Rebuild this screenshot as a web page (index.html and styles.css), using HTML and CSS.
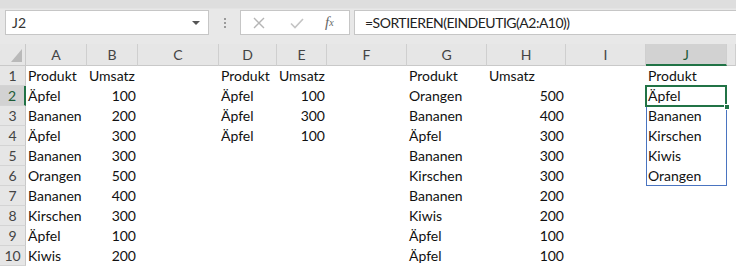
FILE: index.html
```html
<!DOCTYPE html>
<html lang="de">
<head>
<meta charset="utf-8">
<title>Excel – SORTIEREN</title>
<link rel="stylesheet" href="styles.css">
</head>
<body>
<div class="app">
  <div class="formulabar">
    <div class="namebox">
      <span class="name">J2</span>
      <span class="dd"></span>
    </div>
    <div class="grip"><i></i><i></i><i></i></div>
    <div class="fbtns">
      <span class="fb cancel">
        <svg width="14" height="14" viewBox="0 0 14 14"><path d="M2 2L12 12M12 2L2 12" stroke="#b5b5b5" stroke-width="1.4" fill="none"/></svg>
      </span>
      <span class="fb enter">
        <svg width="16" height="14" viewBox="0 0 16 14"><path d="M2 7.5L6 11.5L14 3" stroke="#c4c4c4" stroke-width="1.6" fill="none"/></svg>
      </span>
      <span class="fb fx"><i>f</i><sub>x</sub></span>
    </div>
    <div class="formula">=SORTIEREN(EINDEUTIG(A2:A10))</div>
  </div>

  <div class="sheet">
    <div class="corner"><span class="tri"></span></div>
    <div class="ch">A</div><div class="ch">B</div><div class="ch">C</div><div class="ch">D</div><div class="ch">E</div><div class="ch">F</div><div class="ch">G</div><div class="ch">H</div><div class="ch">I</div><div class="ch active">J</div><div class="ch"></div>

    <div class="rh">1</div><div class="c">Produkt</div><div class="c">Umsatz</div><div class="c"></div><div class="c">Produkt</div><div class="c">Umsatz</div><div class="c"></div><div class="c">Produkt</div><div class="c">Umsatz</div><div class="c"></div><div class="c">Produkt</div><div class="c"></div>
    <div class="rh active">2</div><div class="c">Äpfel</div><div class="c n">100</div><div class="c"></div><div class="c">Äpfel</div><div class="c n">100</div><div class="c"></div><div class="c">Orangen</div><div class="c n">500</div><div class="c"></div><div class="c sp sp-top cur"><span class="t">Äpfel</span><span class="handle"></span></div><div class="c"></div>
    <div class="rh">3</div><div class="c">Bananen</div><div class="c n">200</div><div class="c"></div><div class="c">Äpfel</div><div class="c n">300</div><div class="c"></div><div class="c">Bananen</div><div class="c n">400</div><div class="c"></div><div class="c sp">Bananen</div><div class="c"></div>
    <div class="rh">4</div><div class="c">Äpfel</div><div class="c n">300</div><div class="c"></div><div class="c">Äpfel</div><div class="c n">100</div><div class="c"></div><div class="c">Äpfel</div><div class="c n">300</div><div class="c"></div><div class="c sp">Kirschen</div><div class="c"></div>
    <div class="rh">5</div><div class="c">Bananen</div><div class="c n">300</div><div class="c"></div><div class="c"></div><div class="c"></div><div class="c"></div><div class="c">Bananen</div><div class="c n">300</div><div class="c"></div><div class="c sp">Kiwis</div><div class="c"></div>
    <div class="rh">6</div><div class="c">Orangen</div><div class="c n">500</div><div class="c"></div><div class="c"></div><div class="c"></div><div class="c"></div><div class="c">Kirschen</div><div class="c n">300</div><div class="c"></div><div class="c sp sp-bot">Orangen</div><div class="c"></div>
    <div class="rh">7</div><div class="c">Bananen</div><div class="c n">400</div><div class="c"></div><div class="c"></div><div class="c"></div><div class="c"></div><div class="c">Bananen</div><div class="c n">200</div><div class="c"></div><div class="c"></div><div class="c"></div>
    <div class="rh">8</div><div class="c">Kirschen</div><div class="c n">300</div><div class="c"></div><div class="c"></div><div class="c"></div><div class="c"></div><div class="c">Kiwis</div><div class="c n">200</div><div class="c"></div><div class="c"></div><div class="c"></div>
    <div class="rh">9</div><div class="c">Äpfel</div><div class="c n">100</div><div class="c"></div><div class="c"></div><div class="c"></div><div class="c"></div><div class="c">Äpfel</div><div class="c n">100</div><div class="c"></div><div class="c"></div><div class="c"></div>
    <div class="rh">10</div><div class="c">Kiwis</div><div class="c n">200</div><div class="c"></div><div class="c"></div><div class="c"></div><div class="c"></div><div class="c">Äpfel</div><div class="c n">100</div><div class="c"></div><div class="c"></div><div class="c"></div>
  </div>
</div>
</body>
</html>
```

FILE: styles.css
```css
* { box-sizing: border-box; }
html, body { margin: 0; padding: 0; background: #fff; }
body {
  width: 736px;
  height: 267px;
  overflow: hidden;
  font-family: "Lato", "Liberation Sans", sans-serif;
  color: #000;
}
.app { display: flex; flex-direction: column; }

.formulabar {
  height: 44px;
  background: linear-gradient(#dedede 0, #dedede 8px, #e8e8e8 9px, #e8e8e8 100%);
  display: flex;
  align-items: flex-start;
  padding-top: 10px;
  padding-left: 5px;
}
.namebox {
  width: 204px;
  height: 25px;
  background: #fff;
  border: 1px solid #c6c6c6;
  display: flex;
  align-items: center;
  justify-content: space-between;
  padding: 0 8px 0 6px;
}
.name { font-size: 14px; color: #333; }
.dd {
  width: 0; height: 0;
  border-left: 4px solid transparent;
  border-right: 4px solid transparent;
  border-top: 4px solid #555;
}
.grip {
  width: 31px;
  height: 25px;
  display: flex;
  flex-direction: column;
  align-items: center;
  justify-content: center;
  gap: 2px;
}
.grip i { width: 2px; height: 2px; background: #9a9a9a; display: block; }
.fbtns {
  width: 110px;
  height: 25px;
  background: #fff;
  border: 1px solid #c6c6c6;
  display: flex;
  align-items: center;
  padding-left: 11px;
}
.fb { display: flex; align-items: center; justify-content: center; }
.cancel { width: 14px; }
.enter { width: 16px; margin-left: 23px; }
.fx {
  margin-left: 20px;
  font-family: "Liberation Serif", serif;
  color: #666;
  font-size: 15px;
}
.fx i { font-style: italic; }
.fx sub { font-size: 10px; font-style: italic; vertical-align: -1px; }
.formula {
  margin-left: 4px;
  flex: 1;
  height: 25px;
  background: #fff;
  border: 1px solid #c6c6c6;
  border-right: none;
  padding-left: 10px;
  font-size: 14px;
  letter-spacing: -0.5px;
  line-height: 23px;
  color: #222;
  white-space: nowrap;
}

.sheet {
  display: grid;
  grid-template-columns: 26px 61px 51px 81px 58px 50px 80px 80px 79px 80px 81px 1fr;
  grid-template-rows: 22px repeat(10, 20px);
  background: #fff;
}
.corner {
  background: #e6e6e6;
  border-right: 1px solid #c9c9c9;
  border-bottom: 1px solid #c9c9c9;
  position: relative;
}
.tri {
  position: absolute;
  right: 3px;
  bottom: 3px;
  width: 0; height: 0;
  border-left: 11px solid transparent;
  border-bottom: 13px solid #b9b9b9;
}
.ch {
  background: #e6e6e6;
  border-bottom: 1px solid #c9c9c9;
  border-right: 1px solid #cfcfcf;
  font-size: 14px;
  color: #444;
  text-align: center;
  line-height: 20px;
  padding-top: 1px;
}
.ch.active {
  background: #d2d2d2;
  border-bottom: 2px solid #217346;
  color: #1e5c38;
}
.rh {
  background: #e6e6e6;
  border-right: 1px solid #c9c9c9;
  border-bottom: 1px solid #d4d4d4;
  font-size: 14px;
  color: #444;
  text-align: center;
  line-height: 20px;
}
.rh.active {
  background: #d2d2d2;
  color: #1e5c38;
  border-right: 2px solid #217346;
}
.c {
  font-size: 14px;
  line-height: 20px;
  padding-left: 2px;
  white-space: nowrap;
  color: #111;
}
.c.n { text-align: right; padding-right: 2px; padding-left: 0; }

.sp { box-shadow: inset 1px 0 0 #4a74c0, inset -1px 0 0 #4a74c0; }
.sp.sp-top { box-shadow: inset 1px 0 0 #4a74c0, inset -1px 0 0 #4a74c0, inset 0 1px 0 #4a74c0; }
.sp.sp-bot { box-shadow: inset 1px 0 0 #4a74c0, inset -1px 0 0 #4a74c0, inset 0 -1px 0 #4a74c0; }

.cur { position: relative; }
.cur::after {
  content: "";
  position: absolute;
  top: -1px;
  left: -1px;
  right: 0;
  bottom: -1px;
  border: 2px solid #217346;
}
.handle {
  position: absolute;
  right: -3px;
  bottom: -4px;
  width: 6px;
  height: 6px;
  background: #217346;
  border: 1px solid #fff;
  z-index: 2;
}
```
